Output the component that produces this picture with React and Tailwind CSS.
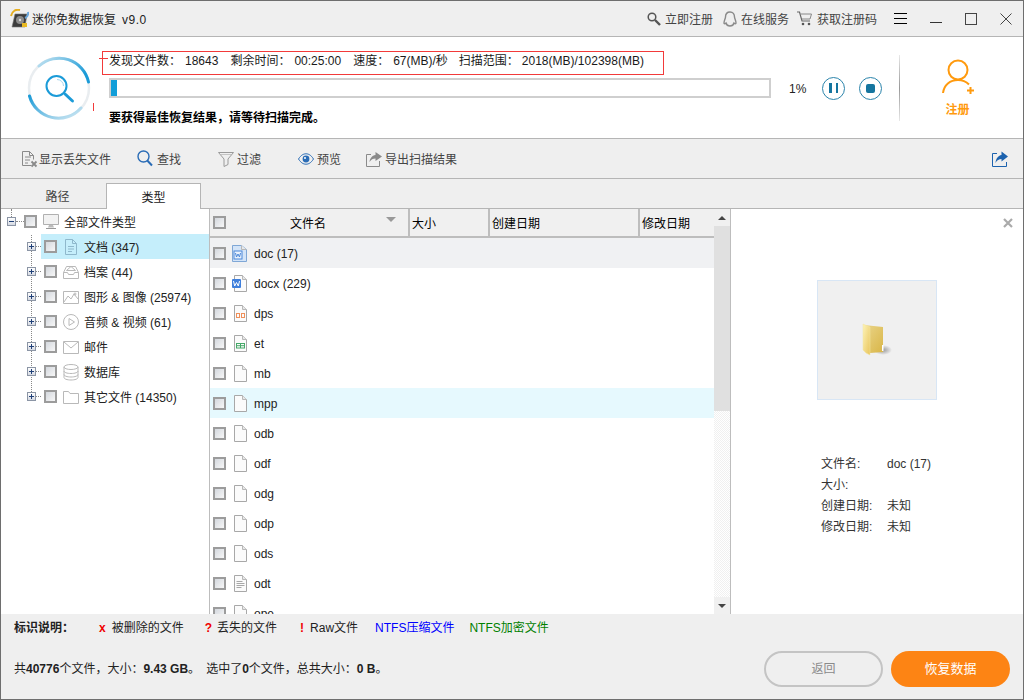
import React from 'react';

const treeItems = [
  { label: '文档 (347)', icon: 'doc', active: true },
  { label: '档案 (44)', icon: 'archive' },
  { label: '图形 & 图像 (25974)', icon: 'image' },
  { label: '音频 & 视频 (61)', icon: 'play' },
  { label: '邮件', icon: 'mail' },
  { label: '数据库', icon: 'db' },
  { label: '其它文件 (14350)', icon: 'folder' },
];

const fileRows = [
  { name: 'doc (17)', type: 'word', bg: 'bg-[#f0f1f3]' },
  { name: 'docx (229)', type: 'wordx' },
  { name: 'dps', type: 'dps' },
  { name: 'et', type: 'et' },
  { name: 'mb', type: 'blank' },
  { name: 'mpp', type: 'blank', bg: 'bg-[#e6f9fe]' },
  { name: 'odb', type: 'blank' },
  { name: 'odf', type: 'blank' },
  { name: 'odg', type: 'blank' },
  { name: 'odp', type: 'blank' },
  { name: 'ods', type: 'blank' },
  { name: 'odt', type: 'text' },
  { name: 'ope', type: 'blank' },
];

function Check() {
  return (
    <span className="block w-[13px] h-[13px] shrink-0 border-2 border-[#9c9c9c] bg-gradient-to-br from-[#d4d8de] to-[#f7f7f7]"></span>
  );
}

function Expander({ open }) {
  return (
    <span className="relative block w-[9px] h-[9px] shrink-0 border border-[#8b95a5] bg-gradient-to-b from-white to-[#d5d9e2]">
      <span className="absolute left-[1px] top-[3px] w-[5px] h-[1px] bg-[#1f3f77]"></span>
      {!open && <span className="absolute left-[3px] top-[1px] w-[1px] h-[5px] bg-[#1f3f77]"></span>}
    </span>
  );
}

function TreeIcon({ type }) {
  const s = { fill: 'none', stroke: '#b9b9b9', strokeWidth: 1 };
  return (
    <svg width="16" height="18" viewBox="0 0 16 18" className="shrink-0">
      {type === 'doc' && (
        <g fill="none" stroke="#8fb8cc">
          <path d="M2.5 1.5h7l4 4v11h-11z" />
          <path d="M9.5 1.5v4h4M5 8.5h6M5 11h6M5 13.5h4" />
        </g>
      )}
      {type === 'archive' && (
        <g {...s}>
          <path d="M.5 9.5l3-6h9l3 6v6h-15z" />
          <path d="M.5 9.5h4l1 2h5l1-2h4M3.5 7.5l4.5-4 4.5 4z" />
        </g>
      )}
      {type === 'image' && (
        <g {...s}>
          <path d="M.5 3.5h15v12H.5z" />
          <path d="M1 14l4-6 3 3 3-5 4 5" />
          <circle cx="12" cy="6" r="1" />
        </g>
      )}
      {type === 'play' && (
        <g {...s}>
          <circle cx="8" cy="9" r="7.5" />
          <path d="M6 5.5l5.5 3.5L6 12.5z" />
        </g>
      )}
      {type === 'mail' && (
        <g {...s}>
          <path d="M.5 3.5h15v12H.5z" />
          <path d="M1 4l7 6 7-6" />
        </g>
      )}
      {type === 'db' && (
        <g {...s}>
          <ellipse cx="8" cy="4" rx="7" ry="2.5" />
          <path d="M1 4v10.5c0 1.4 3 2.5 7 2.5s7-1.100 7-2.500V4M1 8c0 1.400 3 2.500 7 2.500S15 9.400 15 8M1 11.500c0 1.400 3 2.500 7 2.500s7-1.100 7-2.500" />
        </g>
      )}
      {type === 'folder' && (
        <g {...s}>
          <path d="M.5 15.500v-12h5l1.500 2h8.500v10z" />
        </g>
      )}
    </svg>
  );
}

function FileIcon({ type }) {
  const isWord = type === 'word';
  return (
    <svg width="16" height="17" viewBox="-2 0 16 17" className="shrink-0">
      <path
        d={isWord ? 'M-1.500.5h9l5 4v12h-14z' : 'M.5.5h8l4 4v12H.5z'}
        fill={isWord ? '#d3e4f8' : '#fbfbfb'}
        stroke={isWord ? '#7fa7d6' : '#a8a8a8'}
      />
      <path d={isWord ? 'M7.500.5v4h5' : 'M8.500.5v4h4'} fill="#e8e8e8" stroke="#b8b8b8" />
      {isWord && <rect x="0" y="6" width="8" height="8" fill="#e8f1fc" stroke="#4a86d8" />}
      {type === 'wordx' && <rect x="-2" y="4" width="9" height="9" rx="1" fill="#3f7fdc" />}
      {isWord && <path d="M1.500 8l1 4 1.500-3 1.500 3 1-4" fill="none" stroke="#4a86d8" />}
      {type === 'wordx' && <path d="M-.5 6l1.200 5 1.800-3.500L4.300 11l1.200-5" fill="none" stroke="#fff" />}
      {type === 'dps' && (
        <g fill="none" stroke="#f0905a">
          <rect x="2.500" y="8.500" width="3" height="4" />
          <rect x="7.500" y="8.500" width="3" height="4" />
        </g>
      )}
      {type === 'et' && (
        <g fill="none" stroke="#45a868">
          <rect x="2.500" y="8.500" width="8" height="4.500" />
          <path d="M2.500 10.700h8M6.500 8.500v4.500" />
        </g>
      )}
      {type === 'text' && <path d="M2.500 6.500h6M2.500 8.500h8M2.500 10.500h8M2.500 12.500h5" stroke="#a8a8a8" fill="none" />}
    </svg>
  );
}

function ScanIcon() {
  return (
    <svg width="64" height="64" viewBox="0 0 64 64" className="shrink-0">
      <defs>
        <linearGradient id="arcA" x1="0" y1="0" x2="1" y2="0.500">
          <stop offset="0" stopColor="#c5e3f1" />
          <stop offset="1" stopColor="#1b9bd8" />
        </linearGradient>
        <linearGradient id="arcB" x1="0" y1="0" x2="1" y2="0.800">
          <stop offset="0" stopColor="#1b9bd8" />
          <stop offset="1" stopColor="#c5e3f1" />
        </linearGradient>
      </defs>
      <circle cx="32" cy="32" r="30" fill="none" stroke="#e9edf0" strokeWidth="2.500" />
      <path d="M12 10A30 30 0 0 1 61.500 26" fill="none" stroke="url(#arcA)" strokeWidth="3" strokeLinecap="round" />
      <path d="M2.500 40A30 30 0 0 0 54 52" fill="none" stroke="url(#arcB)" strokeWidth="3" strokeLinecap="round" />
      <circle cx="29.500" cy="30" r="10" fill="none" stroke="#1b9bd8" strokeWidth="2" />
      <path d="M30 23.500a6.500 6.500 0 0 1 6.500 6.500" fill="none" stroke="#a5d6ee" strokeWidth="1" />
      <path d="M38 38l7.500 7" stroke="#1b9bd8" strokeWidth="3" strokeLinecap="round" />
    </svg>
  );
}

function AppLogo() {
  return (
    <svg width="19" height="20" viewBox="0 0 19 20" className="shrink-0">
      <path d="M2 18L5 5h12l-2 13z" fill="#3d3d3d" stroke="#777" strokeWidth=".6" />
      <circle cx="10" cy="11" r="4" fill="#8c8c8c" />
      <circle cx="10" cy="11" r="1.200" fill="#ddd" />
      <path d="M1 7c1-5 5-7 9-6" fill="none" stroke="#e6ae1f" strokeWidth="2" />
      <path d="M18 3c.500 3-.500 5-3 6" fill="none" stroke="#6aa7dd" strokeWidth="2" />
      <rect x="12" y="14" width="5" height="4" fill="#e8b923" />
    </svg>
  );
}

function ToolIcon({ type }) {
  if (type === 'lost') {
    return (
      <svg width="17" height="18" viewBox="0 0 17 18" className="shrink-0">
        <path d="M10 15.500H1.500v-14h7l4 4v4M8.500 1.500v4h4M4 7h6M4 10h5M4 13h3" fill="none" stroke="#8a8a8a" />
        <path d="M10.500 11.500l5 5M15.500 11.500l-5 5" stroke="#8a8a8a" strokeWidth="1.800" />
      </svg>
    );
  }
  if (type === 'find') {
    return (
      <svg width="16" height="17" viewBox="0 0 16 17" className="shrink-0">
        <circle cx="6.500" cy="6.500" r="5.500" fill="none" stroke="#2a6cb6" strokeWidth="1.400" />
        <path d="M10.500 10.800l4.500 4.700" stroke="#2a6cb6" strokeWidth="2" />
      </svg>
    );
  }
  if (type === 'filter') {
    return (
      <svg width="16" height="16" viewBox="0 0 16 16" className="shrink-0">
        <path d="M.5 1.500h15L10 8v5.500L6 15.500V8z" fill="none" stroke="#9a9a9a" />
        <path d="M3 3.500h10" stroke="#c4c4c4" />
      </svg>
    );
  }
  if (type === 'eye') {
    return (
      <svg width="16" height="12" viewBox="0 0 16 12" className="shrink-0">
        <path d="M.5 6C3 2 5.500.8 8 .8S13 2 15.500 6C13 10 10.500 11.200 8 11.200S3 10 .5 6z" fill="none" stroke="#2a6cb6" />
        <circle cx="8" cy="6" r="3.400" fill="#2a6cb6" />
        <circle cx="7" cy="5" r="1" fill="#fff" />
      </svg>
    );
  }
  return (
    <svg width="16" height="16" viewBox="0 0 16 16" className="shrink-0">
      <path d="M5 3.500H.5v12h13V10" fill="none" stroke="#8a8a8a" />
      <path d="M9.500 1L16 5.500 9.500 10V7.500C7 7.500 5 8.500 3.500 11 3.800 7.500 6 4.500 9.500 4z" fill="#8a8a8a" />
    </svg>
  );
}

function ToolItem({ icon, gap, className, children }) {
  return (
    <div className={'flex items-center shrink-0 text-[#444] ' + gap + ' ' + className}>
      <ToolIcon type={icon} />
      <span className="pt-[2px]">{children}</span>
    </div>
  );
}

function RoundCtl({ children }) {
  return (
    <span className="flex items-center justify-center w-[23px] h-[23px] shrink-0 rounded-full border border-[#2b84ab]">
      {children}
    </span>
  );
}

function OpenFolder() {
  return (
    <svg width="30" height="36" viewBox="0 0 30 36">
      <defs>
        <linearGradient id="flapA" x1="0" y1="0" x2="1" y2="1">
          <stop offset="0" stopColor="#fdf3b8" />
          <stop offset="1" stopColor="#e9c55c" />
        </linearGradient>
        <linearGradient id="flapB" x1="0" y1="0" x2="1" y2="1">
          <stop offset="0" stopColor="#ead58a" />
          <stop offset="1" stopColor="#d9b648" />
        </linearGradient>
        <radialGradient id="shadowA">
          <stop offset="0" stopColor="#999" />
          <stop offset="1" stopColor="#f0f0f0" />
        </radialGradient>
      </defs>
      <ellipse cx="21" cy="27" rx="9" ry="5" fill="url(#shadowA)" />
      <path d="M2 2l19 2v25l-13 1z" fill="url(#flapB)" />
      <path d="M1 1l7 3v28l-4-2-3-3z" fill="url(#flapA)" stroke="#f2e4a0" strokeWidth=".5" />
      <path d="M20 22h1.500v6H20z" fill="#fff" />
    </svg>
  );
}

export default function App() {
  return (
    <div className="w-[1024px] h-[700px] flex flex-col overflow-hidden border border-[#6e6e6e] bg-[#efefef] text-[12px] leading-[16px] text-[#222] font-['Liberation_Sans','Noto_Sans_CJK_SC',sans-serif]">
      {/* title bar */}
      <div className="flex items-center h-[36px] shrink-0 border-b border-[#b5b5b5] pl-[9px]">
        <AppLogo />
        <span className="ml-[3px] pt-[2px]">迷你免数据恢复</span>
        <span className="ml-[6px] pt-[2px] tracking-[.5px]">v9.0</span>
        <div className="ml-auto flex items-center">
          <svg width="14" height="14" viewBox="0 0 14 14" className="shrink-0">
            <circle cx="5" cy="5" r="3.800" fill="#eee" stroke="#555" strokeWidth="1.500" />
            <path d="M8 8l5 5" stroke="#555" strokeWidth="2.400" />
          </svg>
          <span className="ml-[4px] pt-[2px] text-[#444]">立即注册</span>
          <svg width="14" height="16" viewBox="0 0 14 16" className="ml-[10px] shrink-0">
            <path d="M7 1c3 0 4.500 2.200 4.500 5 0 1.500 1.500 3.500 1.500 6 0 1-1 1-2 0-.5 2-2 3-4 3s-3.500-1-4-3c-1 1-2 1-2 0 0-2.500 1.500-4.500 1.500-6 0-2.800 1.500-5 4.500-5z" fill="none" stroke="#8a8a8a" strokeWidth="1.400" />
          </svg>
          <span className="ml-[4px] pt-[2px] text-[#444]">在线服务</span>
          <svg width="15" height="15" viewBox="0 0 15 15" className="ml-[8px] shrink-0">
            <path d="M0 1h2.500l2.500 9h8" fill="none" stroke="#666" strokeWidth="1.200" />
            <path d="M3.500 3h11l-1.500 5H5" fill="none" stroke="#888" />
            <circle cx="6" cy="13" r="1.300" fill="#555" />
            <circle cx="12" cy="13" r="1.300" fill="#555" />
          </svg>
          <span className="ml-[5px] pt-[2px] text-[#444]">获取注册码</span>
          <div className="ml-[17px] w-[13px] flex flex-col gap-[4px]">
            <span className="block h-[1px] bg-black"></span>
            <span className="block h-[1px] bg-black"></span>
            <span className="block h-[1px] bg-black"></span>
          </div>
          <span className="block ml-[23px] w-[12px] h-[1px] mt-[7px] bg-[#333]"></span>
          <span className="block ml-[23px] w-[12px] h-[12px] border border-[#444]"></span>
          <svg width="12" height="12" viewBox="0 0 12 12" className="ml-[23px] mr-[11px] shrink-0">
            <path d="M.5.500l11 11M11.500.500l-11 11" stroke="#444" strokeWidth="1" />
          </svg>
        </div>
      </div>

      {/* scan header */}
      <div className="relative flex h-[102px] shrink-0 items-stretch bg-white border-b border-[#b5b5b5]">
        <div className="pl-[26px] pr-[18px] self-center">
          <ScanIcon />
        </div>
        <div className="w-[772px] shrink-0 pt-[14px]">
          <div className="flex h-[18px] pt-[2px] items-center text-[#1a1a1a]">
            <span>发现文件数：</span>
            <span className="ml-[4px]">18643</span>
            <span className="ml-[12px]">剩余时间：</span>
            <span className="ml-[4px]">00:25:00</span>
            <span className="ml-[12px]">速度：</span>
            <span className="ml-[4px]">67(MB)/秒</span>
            <span className="ml-[11px]">扫描范围：</span>
            <span className="ml-[3px]">2018(MB)/102398(MB)</span>
          </div>
          <div className="flex h-[20px] items-center mt-[9px]">
            <div className="w-[662px] h-[20px] shrink-0 border-2 border-[#cfcfcf]">
              <div className="w-[6px] h-full bg-[#129ed9]"></div>
            </div>
            <span className="ml-[18px] w-[17px] pt-[2px]">1%</span>
            <span className="ml-[16px]">
              <RoundCtl>
                <span className="flex gap-[4px]">
                  <span className="block w-[2.500px] h-[10px] bg-[#15759f]"></span>
                  <span className="block w-[2.500px] h-[10px] bg-[#15759f]"></span>
                </span>
              </RoundCtl>
            </span>
            <span className="ml-[14px]">
              <RoundCtl>
                <span className="block w-[9px] h-[9px] rounded-[2px] bg-[#15759f]"></span>
              </RoundCtl>
            </span>
          </div>
          <div className="mt-[10px] h-[18px] pt-[2px] flex items-center font-bold text-black">要获得最佳恢复结果，请等待扫描完成。</div>
        </div>
        <div className="ml-[18px] w-[1px] h-[66px] self-center bg-gradient-to-b from-[#e8e8e8] via-[#999] to-[#e8e8e8]"></div>
        <div className="w-[115px] flex flex-col items-center pt-[22px]">
          <svg width="34" height="36" viewBox="0 0 34 36">
            <circle cx="17" cy="11" r="9.500" fill="none" stroke="#ff9a0e" strokeWidth="2" />
            <path d="M2 34c1-8 7-13 15-13 4.500 0 8 1.500 11 4.500" fill="none" stroke="#ff9a0e" strokeWidth="2" />
            <path d="M29.500 28v7M26 31.500h7" stroke="#ff9a0e" strokeWidth="2" />
          </svg>
          <span className="mt-[7px] font-bold text-[#ff9a0e]">注册</span>
        </div>
        <div className="absolute left-[101px] top-[14px] w-[562px] h-[24px] border border-[#f23a3a]"></div>
        <div className="absolute left-[98px] top-[21px] w-[9px] h-[1px] bg-[#f23a3a]"></div>
        <div className="absolute left-[92px] top-[66px] w-[1px] h-[8px] bg-[#f23a3a]"></div>
      </div>

      {/* toolbar */}
      <div className="flex items-center h-[40px] shrink-0 border-b border-[#b5b5b5] pl-[20px]">
        <ToolItem icon="lost" gap="gap-[1px]" className="">显示丢失文件</ToolItem>
        <ToolItem icon="find" gap="gap-[4px]" className="ml-[26px]">查找</ToolItem>
        <ToolItem icon="filter" gap="gap-[3px]" className="ml-[37px]">过滤</ToolItem>
        <ToolItem icon="eye" gap="gap-[3px]" className="ml-[37px]">预览</ToolItem>
        <ToolItem icon="export" gap="gap-[3px]" className="ml-[25px]">导出扫描结果</ToolItem>
        <svg width="16" height="16" viewBox="0 0 16 16" className="ml-auto mr-[15px] shrink-0">
          <path d="M5 2.500H.5v13h14V11" fill="none" stroke="#1c62ae" />
          <path d="M9.500 0.500L16 5.500 9.500 10.500V8C7 8 5 9 3.500 12 3.800 8 6 4.500 9.500 4z" fill="#1c62ae" />
        </svg>
      </div>

      {/* tabs */}
      <div className="flex h-[30px] shrink-0 items-end border-b border-[#b5b5b5]">
        <div className="w-[105px] h-[26px] pt-[4px] pl-[8px] flex items-center justify-center text-[#444]">路径</div>
        <div className="relative top-[1px] w-[95px] h-[26px] pt-[2px] flex items-center justify-center bg-white border-x border-t border-[#b5b5b5]">类型</div>
      </div>

      {/* main */}
      <div className="flex h-[405px] shrink-0 bg-white overflow-hidden">
        <div className="relative w-[209px] shrink-0 border-r border-[#bdbdbd]">
          <div className="absolute left-[10px] top-0 h-[8px] border-l border-dotted border-[#888]"></div>
          <div className="absolute left-[30px] top-[26px] h-[163px] border-l border-dotted border-[#888]"></div>
          <div className="flex items-center h-[25px] pl-[6px]">
            <Expander open />
            <span className="block w-[8px] border-t border-dotted border-[#888]"></span>
            <Check />
            <svg width="16" height="15" viewBox="0 0 16 15" className="ml-[6px] shrink-0">
              <path d="M.5.500h15v10H.5z" fill="#f2f2f2" stroke="#b0b0b0" />
              <path d="M6 11l-1 2.500h6L10 11" fill="#bbb" />
              <path d="M3 14.500h10" stroke="#999" />
            </svg>
            <span className="ml-[5px] pt-[2px]">全部文件类型</span>
          </div>
          {treeItems.map((item) => (
            <div key={item.label} className="flex items-center h-[25px] pl-[26px]">
              <Expander />
              <span className="block w-[5px] border-t border-dotted border-[#888]"></span>
              <div className={'flex flex-1 items-center h-full pl-[3px] ' + (item.active ? 'bg-[#c5eefb]' : '')}>
                <Check />
                <span className="ml-[6px]">
                  <TreeIcon type={item.icon} />
                </span>
                <span className="ml-[5px] pt-[2px]">{item.label}</span>
              </div>
            </div>
          ))}
        </div>

        <div className="flex flex-col w-[504px] shrink-0 overflow-hidden">
          <div className="flex h-[29px] shrink-0 bg-[#f0f0f0] border-b-2 border-[#bdbdbd] text-black">
            <div className="relative flex items-center justify-center w-[200px] shrink-0 border-r-2 border-[#bdbdbd]">
              <span className="absolute left-[3px] top-[7px]">
                <Check />
              </span>
              <span className="ml-[-2px] pt-[2px]">文件名</span>
              <span className="absolute left-[176px] top-[8px] w-0 h-0 border-x-[5px] border-t-[5px] border-x-transparent border-t-[#999]"></span>
            </div>
            <div className="flex items-center w-[80px] shrink-0 pl-[2px] pt-[2px] border-r-2 border-[#bdbdbd]">大小</div>
            <div className="flex items-center w-[150px] shrink-0 pl-[2px] pt-[2px] border-r-2 border-[#bdbdbd]">创建日期</div>
            <div className="flex items-center flex-1 pl-[2px] pt-[2px]">修改日期</div>
          </div>
          {fileRows.map((row) => (
            <div key={row.name} className={'flex items-center h-[30px] shrink-0 pl-[3px] ' + (row.bg || '')}>
              <Check />
              <span className="ml-[6px]">
                <FileIcon type={row.type} />
              </span>
              <span className="ml-[6px] pt-[2px]">{row.name}</span>
            </div>
          ))}
        </div>

        <div className="flex flex-col w-[16px] shrink-0">
          <div className="flex items-center justify-center h-[17px] shrink-0 bg-[#f0f0f0]">
            <span className="w-0 h-0 border-x-[4px] border-b-[4px] border-x-transparent border-b-[#444]"></span>
          </div>
          <div className="h-[185px] shrink-0 bg-[#e0e0e0]"></div>
          <div className="flex-1 bg-[repeating-conic-gradient(#f0f0f0_0_25%,#fff_0_50%)] bg-[length:2px_2px]"></div>
          <div className="flex items-center justify-center h-[17px] shrink-0 bg-[#f0f0f0]">
            <span className="w-0 h-0 border-x-[4px] border-t-[4px] border-x-transparent border-t-[#444]"></span>
          </div>
        </div>

        <div className="flex-1 flex flex-col border-l border-[#bdbdbd]">
          <div className="flex justify-end h-[71px] pt-[9px] pr-[10px]">
            <svg width="10" height="10" viewBox="0 0 10 10">
              <path d="M1 1l8 8M9 1l-8 8" stroke="#aaa" strokeWidth="2.200" />
            </svg>
          </div>
          <div className="mx-auto flex items-center justify-center w-[120px] h-[120px] bg-[#f0f0f0] border border-[#d8e6f5]">
            <span className="mt-[2px]">
              <OpenFolder />
            </span>
          </div>
          <div className="mt-[53px] pl-[90px] text-[#333]">
            <div className="flex items-center h-[21px]">
              <span className="w-[66px]">文件名:</span>
              <span>doc (17)</span>
            </div>
            <div className="flex items-center h-[21px]">
              <span className="w-[66px]">大小:</span>
            </div>
            <div className="flex items-center h-[21px]">
              <span className="w-[66px]">创建日期:</span>
              <span>未知</span>
            </div>
            <div className="flex items-center h-[21px]">
              <span className="w-[66px]">修改日期:</span>
              <span>未知</span>
            </div>
          </div>
        </div>
      </div>

      {/* legend + actions */}
      <div className="flex flex-col flex-1">
        <div className="flex items-center h-[26px] pt-[2px] shrink-0 pl-[13px]">
          <span className="font-bold">标识说明：</span>
          <span className="ml-[25px] font-bold text-[#f00000]">x</span>
          <span className="ml-[6px]">被删除的文件</span>
          <span className="ml-[21px] font-bold text-[#f00000]">?</span>
          <span className="ml-[5px]">丢失的文件</span>
          <span className="ml-[23px] font-bold text-[#f00000]">!</span>
          <span className="ml-[6px]">Raw文件</span>
          <span className="ml-[17px] text-[#0000ff]">NTFS压缩文件</span>
          <span className="ml-[15px] text-[#008000]">NTFS加密文件</span>
        </div>
        <div className="flex items-center h-[36px] mt-[11px] shrink-0 pl-[13px] pr-[13px]">
          <span>共<b>40776</b>个文件，大小：<b>9.43 GB</b>。</span>
          <span className="ml-[6px]">选中了<b>0</b>个文件，总共大小：<b>0 B</b>。</span>
          <button className="ml-auto w-[119px] h-[36px] rounded-full border-2 border-[#c4c4c4] text-[#8a8a8a]">返回</button>
          <button className="ml-[8px] w-[119px] h-[36px] rounded-full bg-[#fd8414] text-white text-[13px]">恢复数据</button>
        </div>
      </div>
    </div>
  );
}
